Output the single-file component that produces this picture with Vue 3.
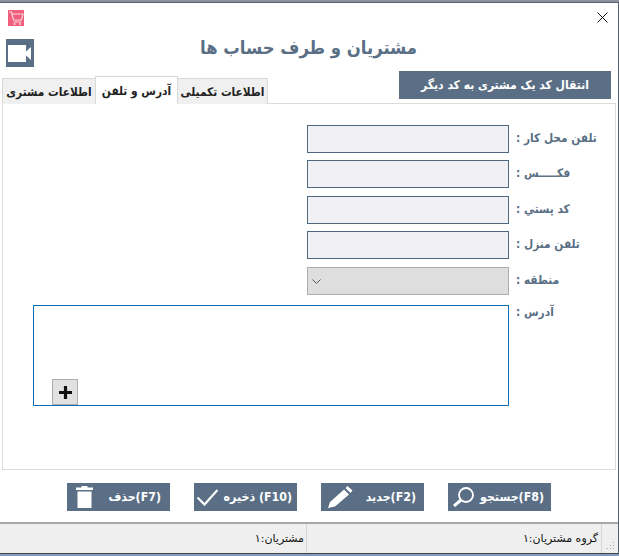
<script setup>
const rows = [
  { label: 'تلفن محل کار :' },
  { label: 'فکـــــس :' },
  { label: 'کد پستي :' },
  { label: 'تلفن منزل :' },
]
</script>

<template>
  <div class="screen">
    <div class="topstrip"></div>
    <div class="window">
      <div class="titlebar">
        <svg class="appicon" width="16" height="16" viewBox="0 0 16 16">
          <rect width="16" height="16" fill="#f0607c" />
          <path d="M1 2h2.500l2 8h8l1.500-6H4M5.500 12h8" fill="none" stroke="#fbd3dc" stroke-width="1.200" />
          <circle cx="6.500" cy="14" r="1" fill="#fbd3dc" />
          <circle cx="12" cy="14" r="1" fill="#fbd3dc" />
        </svg>
        <svg class="close" width="11" height="11" viewBox="0 0 11 11">
          <path d="M.5.5l10 10M10.500.5l-10 10" stroke="#111" stroke-width="1" fill="none" />
        </svg>
      </div>
      <div class="header">
        <div class="video">
          <svg width="23" height="17" viewBox="0 0 23 17">
            <path d="M0 0h18v17H0zM18 6.500l5-4.500v13l-5-4.500z" fill="#fff" />
          </svg>
        </div>
        <h1 class="title">مشتریان و طرف حساب ها</h1>
      </div>
      <div class="tabline">
        <div class="tabs">
          <div class="tab t1">اطلاعات مشتری</div>
          <div class="tab t2 active">آدرس و تلفن</div>
          <div class="tab t3">اطلاعات تکمیلی</div>
        </div>
        <button class="transfer">انتقال کد یک مشتری به کد دیگر</button>
      </div>
      <div class="panel">
        <div class="rows">
          <div v-for="r in rows" :key="r.label" class="row">
            <div class="input"></div>
            <label class="label">{{ r.label }}</label>
          </div>
          <div class="row">
            <div class="select">
              <svg width="9" height="5" viewBox="0 0 9 5">
                <path d="M.5.500l4 4 4-4" fill="none" stroke="#555" stroke-width="1" />
              </svg>
            </div>
            <label class="label">منطقه :</label>
          </div>
          <div class="row address">
            <div class="textarea">
              <button class="plus">
                <svg width="13" height="13" viewBox="0 0 13 13">
                  <path d="M6.500 0v13M0 6.500h13" stroke="#111" stroke-width="3.200" fill="none" />
                </svg>
              </button>
            </div>
            <label class="label">آدرس :</label>
          </div>
        </div>
      </div>
      <div class="actions">
        <button class="action del">
          <svg width="17" height="22" viewBox="0 0 17 22">
            <path d="M0 1.500h5.500V0h6v1.500H17v2.500H0zM1.500 5.500h14V22h-14z" fill="#fff" />
          </svg>
          <span class="cap">(F7)حذف</span>
        </button>
        <button class="action save">
          <svg width="21" height="17" viewBox="0 0 21 17">
            <path d="M.5 8.500l7 7L20.500 1" fill="none" stroke="#fff" stroke-width="2.200" />
          </svg>
          <span class="cap">(F10) ذخیره</span>
        </button>
        <button class="action neww">
          <svg width="25" height="22" viewBox="0 0 25 22">
            <path d="M0 22l2-6L16 3.500l5 5L7 20.500zM17.500 2l2-2 5 4.500-2 2.500z" fill="#fff" />
          </svg>
          <span class="cap">(F2)جدید</span>
        </button>
        <button class="action search">
          <svg width="21" height="20" viewBox="0 0 21 20">
            <circle cx="13" cy="8" r="7" fill="none" stroke="#fff" stroke-width="1.800" />
            <path d="M8 13l-7 6" stroke="#fff" stroke-width="3" fill="none" />
          </svg>
          <span class="cap">(F8)جستجو</span>
        </button>
      </div>
      <div class="status">
        <div class="cell left">مشتریان:۱</div>
        <div class="cell right">گروه مشتریان:۱</div>
        <svg class="grip" width="9" height="9" viewBox="0 0 9 9">
          <path d="M7 1h1v1H7zM4 4h1v1H4zM7 4h1v1H7zM1 7h1v1H1zM4 7h1v1H4zM7 7h1v1H7z" fill="#aaa" />
        </svg>
      </div>
    </div>
    <div class="bottomstrip"></div>
  </div>
</template>

<style>
html, body { margin: 0; background: #fff; }
</style>

<style scoped>
* { box-sizing: border-box; }
.screen {
  width: 619px;
  height: 556px;
  display: flex;
  flex-direction: column;
  overflow: hidden;
  font-family: "DejaVu Sans Condensed", "DejaVu Sans", sans-serif;
  font-stretch: condensed;
}
.topstrip { height: 2px; background: #8a929c; flex: none; }
.bottomstrip { height: 2px; background: #7f9cbc; flex: none; }
.window {
  flex: 1;
  min-height: 0;
  background: #fff;
  border-top: 1px solid #55606c;
  border-right: 1px solid #55606c;
  border-bottom: 1px solid #444;
  display: flex;
  flex-direction: column;
}
.titlebar {
  height: 25px;
  flex: none;
  display: flex;
  align-items: center;
  justify-content: space-between;
  padding: 4px 10px 0 8px;
}
.header {
  height: 40px;
  flex: none;
  display: grid;
  grid-template-columns: 1fr auto 1fr;
  padding-left: 6px;
}
.video {
  width: 28px;
  height: 28px;
  margin-top: 11px;
  background: #5a6f85;
  display: flex;
  align-items: center;
  padding-left: 2px;
}
.title {
  margin: 8px 0 0 -7px;
  font-size: 18.300px;
  line-height: 24px;
  font-weight: 700;
  color: #5a6f85;
  direction: rtl;
  white-space: nowrap;
  grid-column: 2;
}
.tabline {
  height: 35px;
  flex: none;
  display: flex;
  justify-content: space-between;
  padding: 3px 7px 0 2px;
}
.tabs { display: flex; align-items: flex-end; height: 33px; position: relative; z-index: 1; }
.tab {
  height: 26px;
  background: #f0f0f0;
  border: 1px solid #d9d9d9;
  border-bottom: 0;
  font-size: 11.800px;
  font-weight: 700;
  color: #222;
  direction: rtl;
  display: flex;
  align-items: center;
  justify-content: center;
  white-space: nowrap;
}
.t1 { width: 93px; border-right: 0; }
.t2 { width: 83px; }
.t3 { width: 90px; border-left: 0; }
.tab.active {
  height: 28px;
  background: #fff;
}
.transfer {
  width: 212px;
  height: 28px;
  border: 0;
  background: #5a6f85;
  color: #fff;
  font: inherit;
  font-size: 12px;
  font-weight: 700;
  direction: rtl;
  padding: 0;
}
.panel {
  height: 367px;
  flex: none;
  margin: 0 2px 0 2px;
  border: 1px solid #dcdcdc;
  padding: 21px 0 0 0;
}
.rows { display: flex; flex-direction: column; gap: 7px; }
.row { display: flex; height: 28px; align-items: center; }
.row:nth-child(3), .row:nth-child(5) { margin-top: 1px; }
.input {
  margin-left: 304px;
  width: 202px;
  height: 28px;
  background: #f0f0f5;
  border: 1px solid #4f6880;
}
.select {
  margin-left: 304px;
  width: 202px;
  height: 28px;
  background: #dedede;
  border: 1px solid #adadad;
  display: flex;
  align-items: center;
  padding-left: 4px;
}
.label {
  margin-left: 7px;
  width: 90px;
  padding-bottom: 2px;
  font-size: 11.800px;
  font-weight: 700;
  color: #5a6f85;
  direction: rtl;
  text-align: left;
  white-space: nowrap;
}
.address { height: 101px; align-items: flex-start; margin-top: 3px; }
.address .label { padding: 0; }
.textarea {
  position: relative;
  margin-left: 30px;
  width: 476px;
  height: 101px;
  border: 1px solid #0f6cb0;
  background: #fff;
}
.plus {
  position: absolute;
  left: 18px;
  bottom: 0;
  width: 26px;
  height: 26px;
  padding: 0;
  background: #e1e1e1;
  border: 1px solid #adadad;
  display: flex;
  align-items: center;
  justify-content: center;
}
.actions {
  height: 54px;
  flex: none;
  display: flex;
  justify-content: flex-end;
  align-items: center;
  gap: 24px;
  padding: 2px 67px 0 0;
  border-bottom: 2px solid #a8a8a8;
  direction: ltr;
}
.action {
  width: 103px;
  height: 28px;
  background: #5a6f85;
  border: 0;
  color: #fff;
  display: flex;
  align-items: center;
  justify-content: space-between;
  font: inherit;
  font-size: 12.300px;
  font-weight: 700;
}
.del { padding: 0 9px 0 9px; }
.save { padding: 0 5px 0 3px; }
.neww { padding: 0 8px 0 7px; }
.search { padding: 0 7px 0 5px; }
.cap { direction: rtl; white-space: nowrap; }
.status {
  flex: 1;
  min-height: 0;
  background: #efefef;
  position: relative;
  display: flex;
  font-size: 11px;
  font-family: "DejaVu Sans", sans-serif;
  font-stretch: normal;
  color: #111;
  direction: ltr;
}
.cell {
  display: flex;
  align-items: center;
  direction: rtl;
  white-space: nowrap;
  justify-content: flex-start;
}
.cell.left { width: 307px; padding-right: 2px; border-right: 1px solid #d5d5d5; }
.cell.right { width: 295px; border-right: 1px solid #d5d5d5; padding-right: 3px; }
.grip { position: absolute; right: 3px; bottom: 3px; }
</style>
